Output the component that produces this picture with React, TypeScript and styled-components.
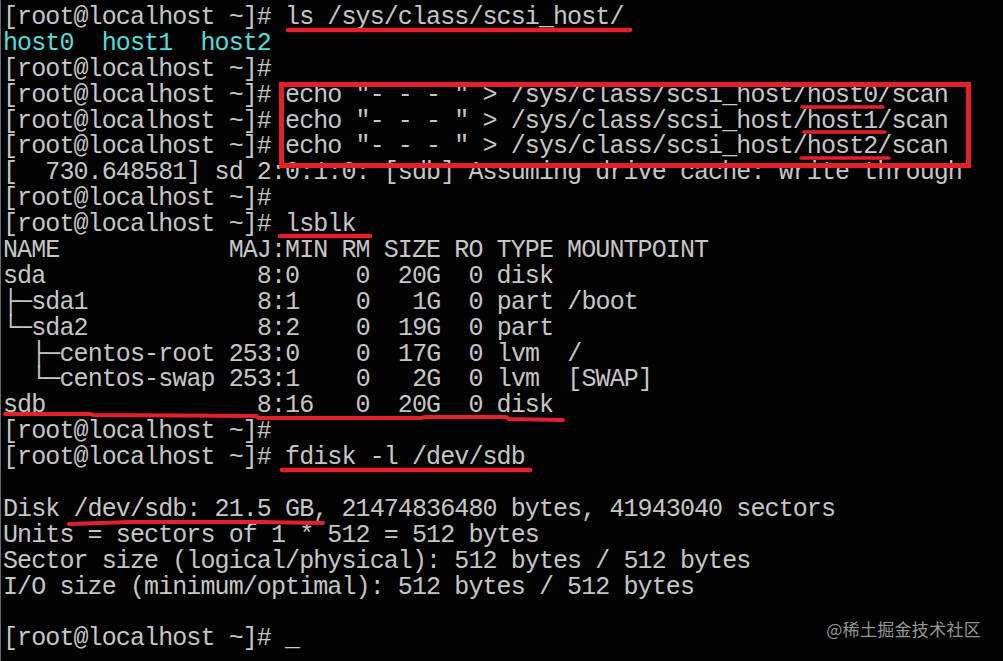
import React from "react";
import styled, { createGlobalStyle } from "styled-components";

const Global = createGlobalStyle`
  html, body { margin: 0; padding: 0; background: #000; }
  #root { width: 1003px; height: 661px; }
`;

const Frame = styled.div`
  position: relative;
  width: 1003px;
  height: 661px;
  box-sizing: border-box;
  background: #030303;
  border-left: 1px solid #6a6a6a;
  overflow: hidden;
`;

const Screen = styled.div`
  display: flex;
  flex-direction: column;
  padding: 5px 0 0 2px;
  font-family: "Liberation Mono", "DejaVu Sans Mono", monospace;
  font-size: 25px;
  letter-spacing: -0.9px;
  line-height: 25.9px;
  color: #c6c6c6;
`;

const Line = styled.div<{ $tone?: "cyan" | "plain" }>`
  height: 25.9px;
  white-space: pre;
  color: ${(p) => (p.$tone === "cyan" ? "#4fdede" : "#c6c6c6")};
`;

const Box = styled.span`
  display: inline-block;
  width: 14.1px;
  text-align: center;
  overflow: visible;
`;

const Overlay = styled.svg`
  position: absolute;
  left: 0;
  top: 0;
  pointer-events: none;
`;

const Watermark = styled.div`
  position: absolute;
  right: 22px;
  bottom: 20px;
  font-family: "Noto Sans CJK SC", "Noto Sans", sans-serif;
  font-size: 17px;
  color: rgba(200, 200, 200, 0.75);
  letter-spacing: 0.3px;
`;

const P = "[root@localhost ~]# ";

const tree = (s: string) =>
  s.split("").map((c, i) =>
    "├└─".includes(c) ? <Box key={i}>{c}</Box> : <React.Fragment key={i}>{c}</React.Fragment>
  );

const lines: { text: React.ReactNode; tone?: "cyan" }[] = [
  { text: P + "ls /sys/class/scsi_host/" },
  { text: "host0  host1  host2", tone: "cyan" },
  { text: P.trimEnd() },
  { text: P + 'echo "- - - " > /sys/class/scsi_host/host0/scan' },
  { text: P + 'echo "- - - " > /sys/class/scsi_host/host1/scan' },
  { text: P + 'echo "- - - " > /sys/class/scsi_host/host2/scan' },
  { text: "[  730.648581] sd 2:0:1:0: [sdb] Assuming drive cache: write through" },
  { text: P.trimEnd() },
  { text: P + "lsblk" },
  { text: "NAME            MAJ:MIN RM SIZE RO TYPE MOUNTPOINT" },
  { text: "sda               8:0    0  20G  0 disk" },
  { text: tree("├─sda1            8:1    0   1G  0 part /boot") },
  { text: tree("└─sda2            8:2    0  19G  0 part") },
  { text: tree("  ├─centos-root 253:0    0  17G  0 lvm  /") },
  { text: tree("  └─centos-swap 253:1    0   2G  0 lvm  [SWAP]") },
  { text: "sdb               8:16   0  20G  0 disk" },
  { text: P.trimEnd() },
  { text: P + "fdisk -l /dev/sdb" },
  { text: "" },
  { text: "Disk /dev/sdb: 21.5 GB, 21474836480 bytes, 41943040 sectors" },
  { text: "Units = sectors of 1 * 512 = 512 bytes" },
  { text: "Sector size (logical/physical): 512 bytes / 512 bytes" },
  { text: "I/O size (minimum/optimal): 512 bytes / 512 bytes" },
  { text: "" },
  { text: P + "_" },
];

const RED = "#e3212b";

export default function App() {
  return (
    <>
      <Global />
      <Frame>
        <Screen>
          {lines.map((l, i) => (
            <Line key={i} $tone={l.tone}>
              {l.text}
            </Line>
          ))}
        </Screen>
        <Overlay width={1003} height={661} viewBox="0 0 1003 661">
          <g stroke={RED} strokeLinecap="round" fill="none">
            <line x1={287} y1={30} x2={629} y2={30} strokeWidth={4.5} />
            <rect x={280.5} y={84.5} width={687} height={81} strokeWidth={5} strokeLinecap="butt" />
            <line x1={801} y1={107} x2={882} y2={107} strokeWidth={3.5} />
            <line x1={803} y1={132} x2={884} y2={132} strokeWidth={3.5} />
            <line x1={800} y1={158} x2={888} y2={158} strokeWidth={3.5} />
            <line x1={279} y1={236} x2={369} y2={236} strokeWidth={4.5} />
            <polyline
              points="4,414 90,414 92,415 255,416 258,418 420,418 424,417 505,417 508,419 562,420"
              strokeWidth={4}
              strokeLinejoin="round"
            />
            <line x1={281} y1={470} x2={529} y2={470} strokeWidth={4.5} />
            <polyline
              points="68,524 130,522 260,522 322,523"
              strokeWidth={4}
              strokeLinejoin="round"
            />
          </g>
        </Overlay>
        <Watermark>@稀土掘金技术社区</Watermark>
      </Frame>
    </>
  );
}
